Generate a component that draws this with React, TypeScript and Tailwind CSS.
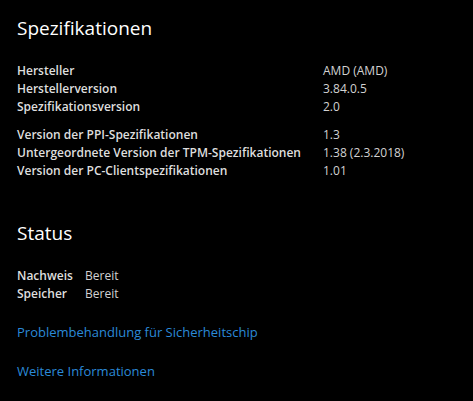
const specs = [
  [
    ["Hersteller", "AMD (AMD)"],
    ["Herstellerversion", "3.84.0.5"],
    ["Spezifikationsversion", "2.0"],
  ],
  [
    ["Version der PPI-Spezifikationen", "1.3"],
    ["Untergeordnete Version der TPM-Spezifikationen", "1.38 (2.3.2018)"],
    ["Version der PC-Clientspezifikationen", "1.01"],
  ],
];

const status = [
  ["Nachweis", "Bereit"],
  ["Speicher", "Bereit"],
];

export default function App() {
  return (
    <div
      className="h-[401px] w-[473px] overflow-hidden whitespace-nowrap bg-black px-[17px] pt-[14px] text-[12px]"
      style={{ fontFamily: '"Open Sans", "Noto Sans", sans-serif' }}
    >
      <h1 className="text-[19px] leading-[28px] text-white">Spezifikationen</h1>

      <div className="mt-[20px] flex flex-col gap-[10px]">
        {specs.map((group, i) => (
          <div key={i} className="grid grid-cols-[306px_1fr] leading-[18px]">
            {group.map(([label, value]) => (
              <div key={label} className="contents">
                <span className="font-semibold text-[#dedede]">{label}</span>
                <span className="text-[#d2d2d2]">{value}</span>
              </div>
            ))}
          </div>
        ))}
      </div>

      <h2 className="mt-[39px] text-[19px] leading-[28px] text-white">Status</h2>

      <div className="mt-[20px] grid grid-cols-[68px_1fr] leading-[18px]">
        {status.map(([label, value]) => (
          <div key={label} className="contents">
            <span className="font-semibold text-[#dedede]">{label}</span>
            <span className="text-[#d2d2d2]">{value}</span>
          </div>
        ))}
      </div>

      <div className="mt-[19px] flex flex-col items-start gap-[19px] text-[13px] leading-[20px] text-[#2b8ad8]">
        <a href="#">Problembehandlung für Sicherheitschip</a>
        <a href="#">Weitere Informationen</a>
      </div>
    </div>
  );
}
